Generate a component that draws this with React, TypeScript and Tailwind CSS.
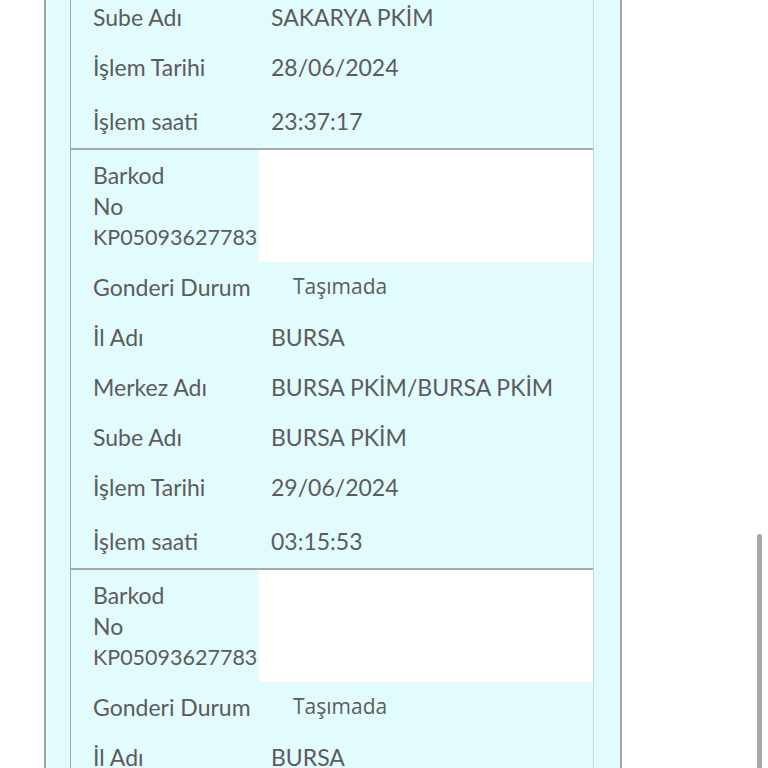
import React from 'react'

interface Row {
  label: string
  value: string
  status?: boolean
}

interface Shipment {
  barcode: string
  rows: Row[]
}

const font = { fontFamily: 'Lato, "Open Sans", sans-serif' }

const makeRows = (il: string, merkez: string, sube: string, tarih: string, saat: string): Row[] => [
  { label: 'Gonderi Durum', value: 'Taşımada', status: true },
  { label: 'İl Adı', value: il },
  { label: 'Merkez Adı', value: merkez },
  { label: 'Sube Adı', value: sube },
  { label: 'İşlem Tarihi', value: tarih },
  { label: 'İşlem saati', value: saat },
]

const shipments: Shipment[] = [
  {
    barcode: 'KP05093627783',
    rows: makeRows('BURSA', 'BURSA PKİM/BURSA PKİM', 'BURSA PKİM', '29/06/2024', '03:15:53'),
  },
  {
    barcode: 'KP05093627783',
    rows: makeRows('BURSA', 'BURSA PKİM/BURSA PKİM', 'BURSA PKİM', '29/06/2024', '07:02:11'),
  },
]

// tail of the previous record, scrolled partly out of view
const previousTail: Row[] = [
  { label: 'Sube Adı', value: 'SAKARYA PKİM' },
  { label: 'İşlem Tarihi', value: '28/06/2024' },
  { label: 'İşlem saati', value: '23:37:17' },
]

function InfoRow({ row, last }: { row: Row; last?: boolean }) {
  return (
    <div className={`flex items-center ${last ? 'h-[56px] pt-[2px]' : 'h-[50px]'}`}>
      <div className="w-[188px] pl-[22px] text-[23px] text-[#5c5c5c] whitespace-nowrap">{row.label}</div>
      {row.status ? (
        <div className="pl-[34px] text-[21px] text-[#5c5c5c]" style={{ fontFamily: '"Open Sans", sans-serif' }}>
          {row.value}
        </div>
      ) : (
        <div className="pl-[12px] text-[23px] text-[#5c5c5c] whitespace-nowrap">{row.value}</div>
      )}
    </div>
  )
}

function ShipmentBlock({ shipment }: { shipment: Shipment }) {
  return (
    <div className="border-t-2 border-[#a9a9a9]">
      <div className="flex h-[112px]">
        <div className="w-[188px] pl-[22px] flex flex-col justify-center text-[23px] leading-[31px] text-[#5c5c5c]">
          <span>Barkod</span>
          <span>No</span>
          <span className="whitespace-nowrap text-[21.5px]">{shipment.barcode}</span>
        </div>
        <div className="flex-1 bg-white" />
      </div>
      {shipment.rows.map((row, idx) => (
        <InfoRow key={idx} row={row} last={idx === shipment.rows.length - 1} />
      ))}
    </div>
  )
}

export default function App() {
  return (
    <div className="relative h-[768px] w-[768px] overflow-hidden bg-white" style={font}>
      <div className="ml-[44px] h-[768px] w-[578px] border-l-2 border-r-2 border-[#a3a3a3] bg-[#e2fbfd] overflow-hidden">
        <div className="ml-[24px] mt-[-8px] w-[524px] border-l border-r border-l-[#a9a9a9] border-r-[#c7d9db]">
          {previousTail.map((row, idx) => (
            <InfoRow key={idx} row={row} last={idx === previousTail.length - 1} />
          ))}
          {shipments.map((s, idx) => (
            <ShipmentBlock key={idx} shipment={s} />
          ))}
        </div>
      </div>
      {/* scrollbar thumb */}
      <div className="absolute left-[757px] top-[534px] h-[240px] w-[5px] rounded-full bg-[#a8a8a8]" />
    </div>
  )
}
